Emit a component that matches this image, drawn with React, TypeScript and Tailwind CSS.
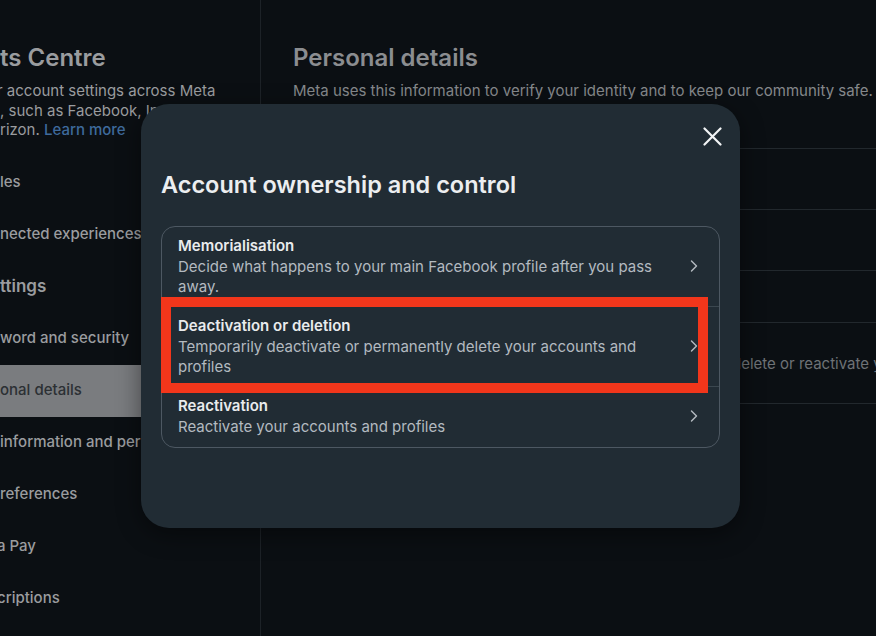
import { ChevronRight } from "lucide-react";

const navRows = [
  { label: "les", kind: "item" },
  { label: "nected experiences", kind: "item" },
  { label: "ttings", kind: "heading" },
  { label: "word and security", kind: "item" },
  { label: "onal details", kind: "active" },
  { label: "information and permissions", kind: "item" },
  { label: "references", kind: "item" },
  { label: "a Pay", kind: "cut" },
  { label: "criptions", kind: "cut" },
];

const options = [
  {
    title: "Memorialisation",
    desc: "Decide what happens to your main Facebook profile after you pass away.",
  },
  {
    title: "Deactivation or deletion",
    desc: "Temporarily deactivate or permanently delete your accounts and profiles",
  },
  {
    title: "Reactivation",
    desc: "Reactivate your accounts and profiles",
  },
];

function Sidebar() {
  return (
    <aside className="w-[261px] h-full shrink-0 border-r border-[#1d2227] overflow-hidden">
      <h1 className="mt-[43px] text-[24px] leading-[30px] font-semibold text-[#9a9c9f] whitespace-nowrap">
        ts Centre
      </h1>
      <div className="mt-[8px] text-[15px] leading-[19.5px] text-[#9a9c9f] whitespace-nowrap">
        <p className="-ml-[3px]">r account settings across Meta</p>
        <p>, such as Facebook, Instagram and Meta</p>
        <p>
          rizon. <span className="text-[#3e6a9c] font-medium">Learn more</span>
        </p>
      </div>
      <ul className="mt-[17px]">
        {navRows.map((r) => (
          <li
            key={r.label}
            className={
              r.kind === "active"
                ? "h-[52px] flex items-center bg-[#7a7c7f] text-[#2c3034] text-[15px] font-medium whitespace-nowrap mr-[14px]"
                : r.kind === "heading"
                ? "h-[52px] flex items-center text-[#9a9c9f] text-[17px] font-semibold whitespace-nowrap"
                : r.kind === "cut"
                ? "h-[52px] flex items-center text-[#9a9c9f] text-[15px] font-medium whitespace-nowrap -ml-[3px]"
                : "h-[52px] flex items-center text-[#9a9c9f] text-[15px] font-medium whitespace-nowrap"
            }
          >
            {r.label}
          </li>
        ))}
      </ul>
    </aside>
  );
}

function MainPanel() {
  return (
    <main className="flex-1 h-full pl-[32px] overflow-hidden">
      <h2 className="mt-[43px] text-[24px] leading-[30px] font-semibold text-[#8b8d90] whitespace-nowrap">
        Personal details
      </h2>
      <p className="mt-[8px] text-[15px] leading-[20px] text-[#85888b] whitespace-nowrap">
        Meta uses this information to verify your identity and to keep our community safe.
      </p>
      <div className="mt-[47px] -mr-[40px] border-t border-[#22282d]">
        <div className="h-[61px] border-b border-[#22282d]" />
        <div className="h-[61px] border-b border-[#22282d]" />
        <div className="h-[52px] border-b border-[#22282d]" />
        <div className="h-[81px] border-b border-[#22282d] flex items-center pt-[3px] pl-[439px] text-[15px] text-[#6e7276] whitespace-nowrap">
          delete or reactivate your accounts and profiles.
        </div>
      </div>
    </main>
  );
}

function Modal() {
  return (
    <div className="absolute left-[141px] top-[104px] w-[599px] h-[424px] rounded-[28px] bg-[#212c34] shadow-[0_6px_24px_rgba(0,0,0,0.45)] px-[20px] flex flex-col">
      <div className="pt-[20px] flex justify-end">
        <button className="w-[24px] h-[24px] -mr-[4px] flex items-center justify-center">
          <svg width="19" height="19" viewBox="0 0 19 19" fill="none">
            <path d="M1.5 1.5 17.5 17.5M17.5 1.5 1.5 17.5" stroke="#f2f4f5" strokeWidth="2.2" strokeLinecap="round" />
          </svg>
        </button>
      </div>
      <h3 className="mt-[23px] text-[23.5px] leading-[28px] font-semibold text-[#eceef0] whitespace-nowrap">
        Account ownership and control
      </h3>
      <div className="relative mt-[27px] rounded-[14px] border border-[#4d5862]">
        {options.map((o, i) => (
          <div
            key={o.title}
            className={
              i > 0
                ? "flex items-center border-t border-[#3b474f] pl-[16px] pr-[12px] pt-[8px] pb-[10px]"
                : "flex items-center pl-[16px] pr-[12px] pt-[8px] pb-[10px]"
            }
          >
            <div className="flex-1 pr-[10px]">
              <div className="text-[15px] leading-[22px] font-semibold text-[#e9ebed]">{o.title}</div>
              <div className="text-[15px] leading-[19.5px] text-[#b3bac0]">{o.desc}</div>
            </div>
            <ChevronRight size={20} strokeWidth={1.7} className="text-[#b3bac0] shrink-0 mr-[3px]" />
          </div>
        ))}
        <div className="absolute -left-[1px] top-[70px] w-[547px] h-[96px] border-[10px] border-[#f2361b]" />
      </div>
    </div>
  );
}

export default function App() {
  return (
    <div className="relative w-[876px] h-[636px] overflow-hidden bg-[#0b0f13] flex font-['Inter','Noto_Sans',sans-serif]">
      <Sidebar />
      <MainPanel />
      <Modal />
    </div>
  );
}
